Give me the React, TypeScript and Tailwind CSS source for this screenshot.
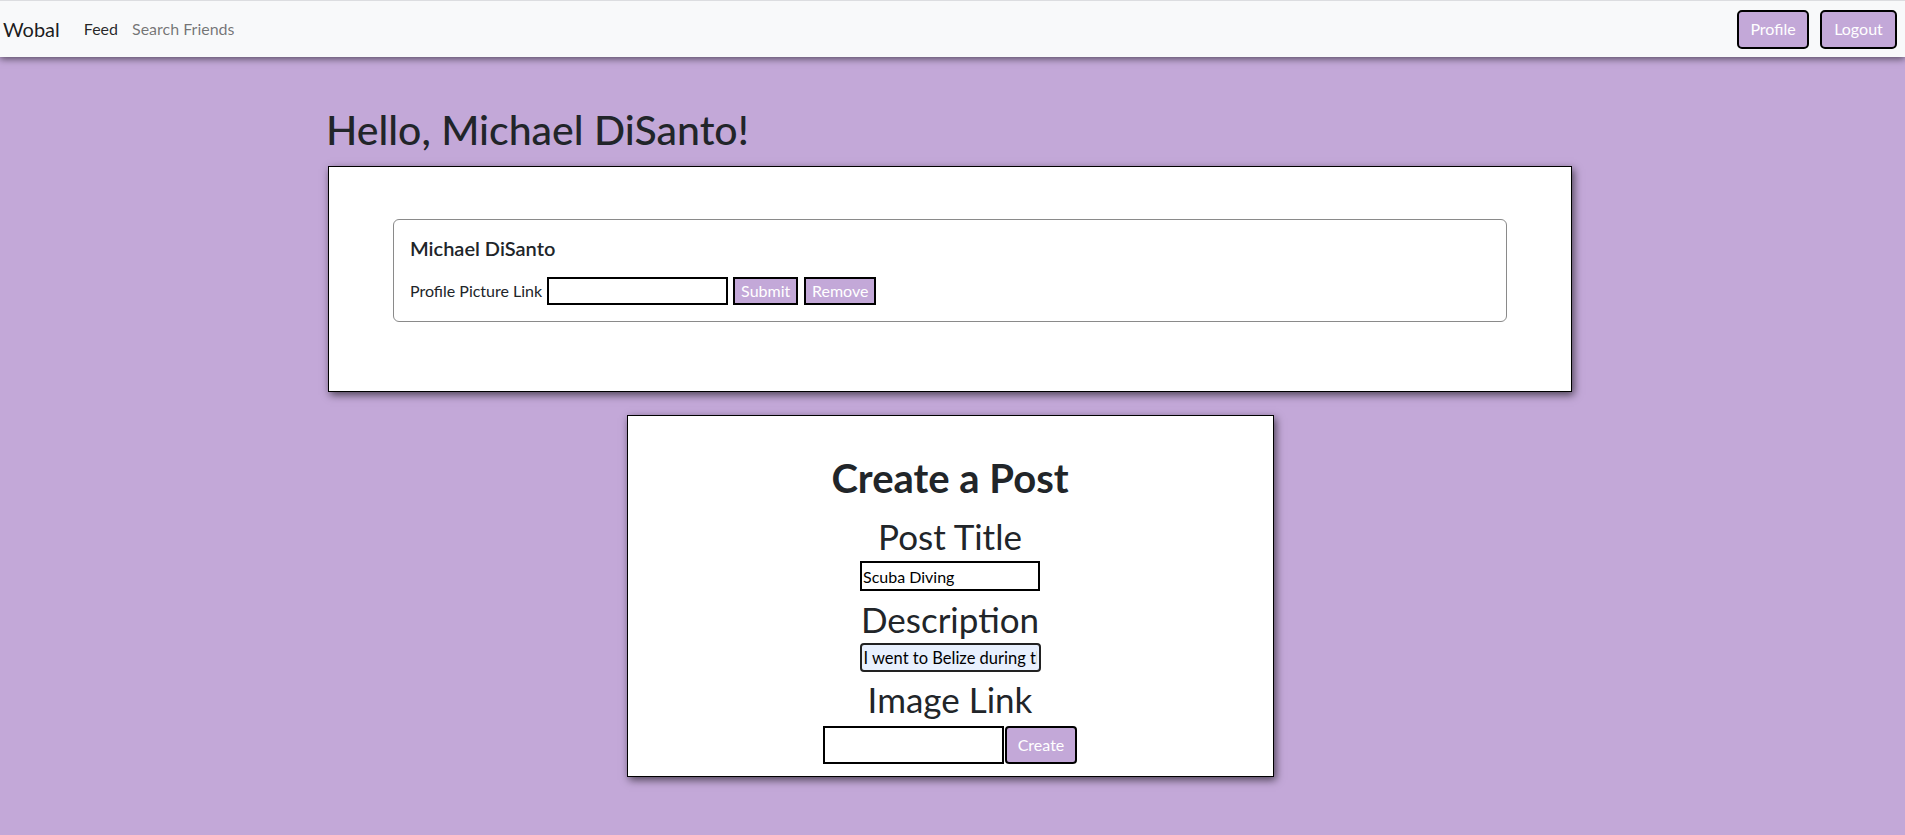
import { useState } from 'react';

const font = { fontFamily: 'Lato, "Segoe UI", "Liberation Sans", sans-serif' };

function Navbar() {
  return (
    <nav className="relative z-10 flex h-[57px] items-center border-t border-[#dcdde0] bg-[#f8f9fa] shadow-[0_2px_7px_rgba(0,0,0,0.55)]">
      <span className="ml-[3px] text-[20px] text-black/90">Wobal</span>
      <a className="ml-[24px] text-[16px] font-normal text-black/85">Feed</a>
      <a className="ml-[14px] text-[16px] text-black/55">Search Friends</a>
      <div className="ml-auto mr-[8px] flex gap-[11px]">
        <button className="h-[39px] w-[72px] rounded-[5px] border-2 border-black bg-[#c3a8d8] text-[16px] text-white">Profile</button>
        <button className="h-[39px] w-[77px] rounded-[5px] border-2 border-black bg-[#c3a8d8] text-[16px] text-white">Logout</button>
      </div>
    </nav>
  );
}

function ProfileCard() {
  const [link, setLink] = useState('');
  return (
    <div className="border border-black bg-white pb-[69px] pl-[64px] pr-[64px] pt-[52px] shadow-[2px_3px_8px_rgba(0,0,0,0.6)]">
      <div className="rounded-[6px] border border-[#8a8a8a] px-[16px] pb-[16px] pt-[16px]">
        <h5 className="text-[20px] font-semibold leading-[24px] text-[#212529]">Michael DiSanto</h5>
        <div className="mt-[17px] flex h-[28px] items-center text-[16px] text-[#212529]">
          <span>Profile Picture Link</span>
          <input
            value={link}
            onChange={(e) => setLink(e.target.value)}
            className="ml-[5px] h-[28px] w-[181px] border-2 border-black bg-white px-[2px] outline-none"
          />
          <button className="ml-[5px] h-[28px] w-[65px] border-2 border-black bg-[#c3a8d8] text-white">Submit</button>
          <button className="ml-[6px] h-[28px] w-[72px] border-2 border-black bg-[#c3a8d8] text-white">Remove</button>
        </div>
      </div>
    </div>
  );
}

function CreatePost() {
  const [title, setTitle] = useState('Scuba Diving');
  const [desc, setDesc] = useState('I went to Belize during the summer and went scuba diving');
  const [image, setImage] = useState('');
  return (
    <div className="mx-auto mt-[23px] flex h-[362px] w-[647px] flex-col items-center border border-black bg-white shadow-[2px_3px_8px_rgba(0,0,0,0.6)]">
      <h1 className="mt-[38px] text-[40px] font-bold leading-[48px] text-[#212529]">Create a Post</h1>
      <label className="mt-[13px] text-[35px] leading-[42px] text-[#212529]">Post Title</label>
      <input
        value={title}
        onChange={(e) => setTitle(e.target.value)}
        className="mt-[4px] h-[30px] w-[180px] border-2 border-black bg-white px-[1px] text-[16px] text-black outline-none"
      />
      <label className="mt-[7px] text-[35px] leading-[42px] text-[#212529]">Description</label>
      <input
        value={desc}
        onChange={(e) => setDesc(e.target.value)}
        className="mt-[3px] h-[29px] w-[181px] rounded-[4px] border-2 border-[#222] bg-[#e8f0fe] px-[2px] text-[16.5px] text-black outline-none"
      />
      <label className="mt-[6px] text-[35px] leading-[42px] text-[#212529]">Image Link</label>
      <div className="mt-[6px] flex">
        <input
          value={image}
          onChange={(e) => setImage(e.target.value)}
          className="h-[38px] w-[181px] border-2 border-black bg-white px-[2px] outline-none"
        />
        <button className="ml-[1px] h-[38px] w-[72px] rounded-[4px] border-2 border-black bg-[#c3a8d8] text-[16px] text-white">Create</button>
      </div>
    </div>
  );
}

export default function App() {
  return (
    <div style={font} className="min-h-[835px] bg-[#c3a8d8]">
      <Navbar />
      <main className="ml-[328px] w-[1244px] pb-[40px]">
        <h1 className="-ml-[2px] mt-[49px] text-[41px] font-medium leading-[48px] text-[#212529]">Hello, Michael DiSanto!</h1>
        <div className="mt-[12px]">
          <ProfileCard />
        </div>
        <CreatePost />
      </main>
    </div>
  );
}
